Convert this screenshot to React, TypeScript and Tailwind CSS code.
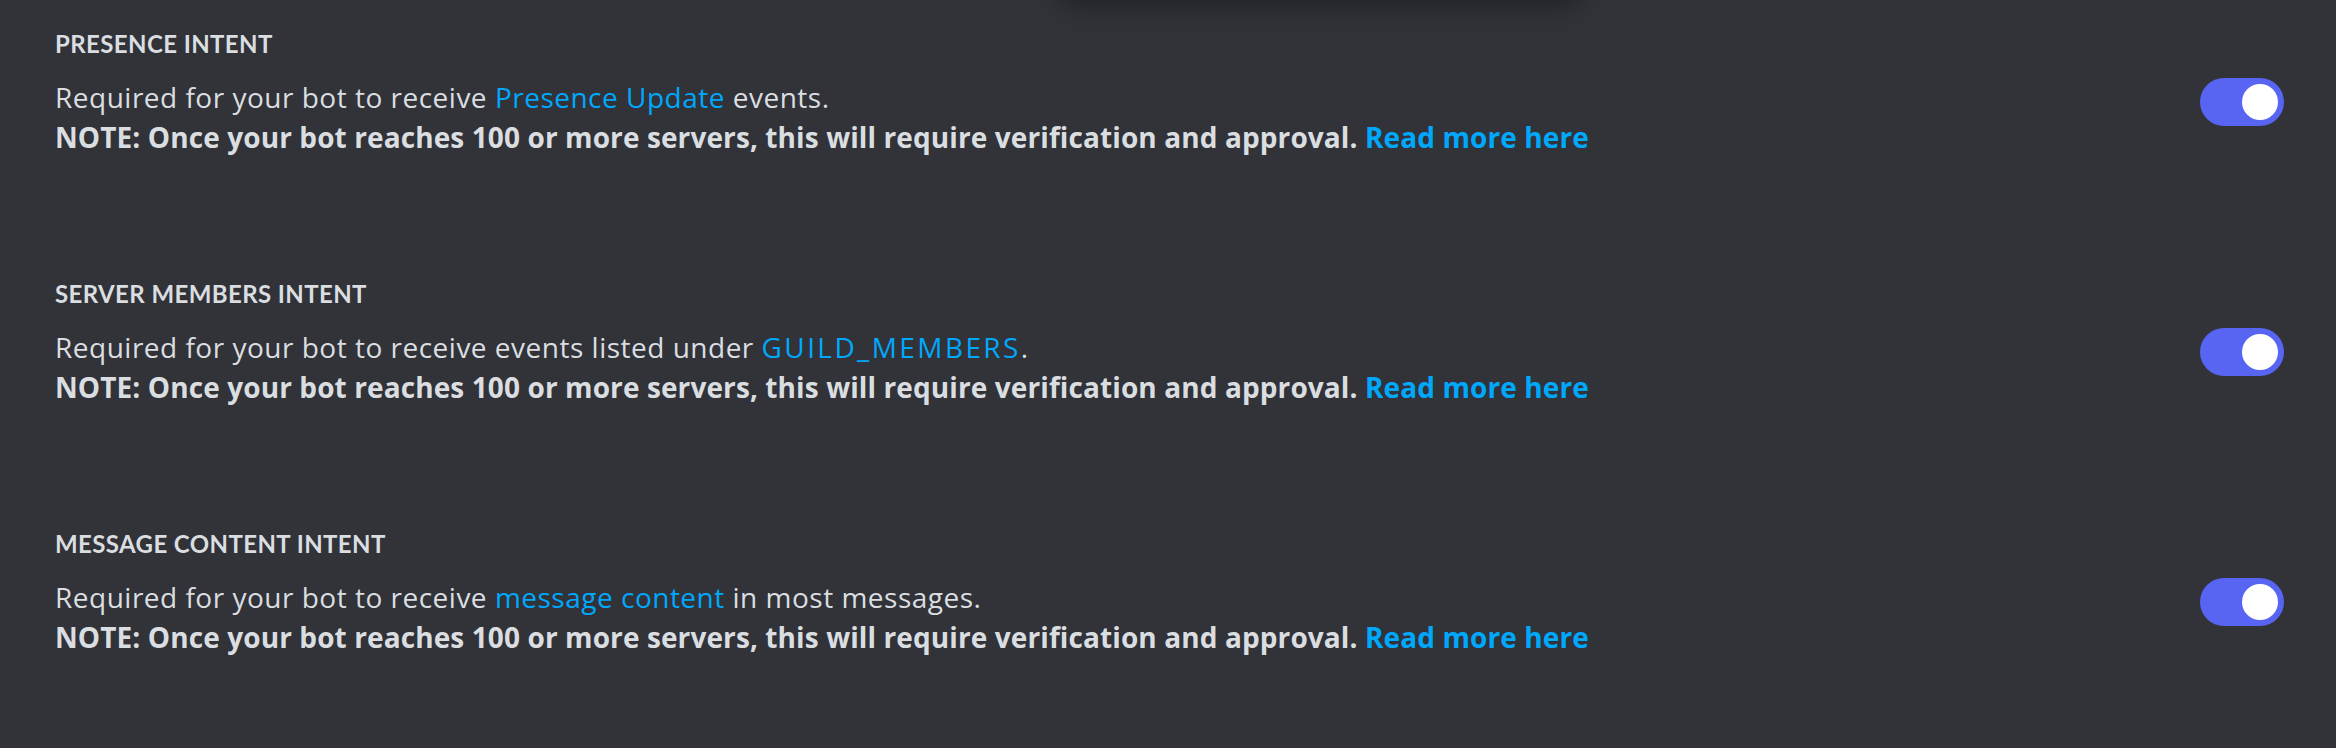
import React from 'react';

interface Intent {
  title: string;
  before: string;
  link: string;
  after: string;
  linkClass?: string;
}

const intents: Intent[] = [
  {
    title: 'Presence Intent',
    before: 'Required for your bot to receive ',
    link: 'Presence Update',
    after: ' events.',
  },
  {
    title: 'Server Members Intent',
    before: 'Required for your bot to receive events listed under ',
    link: 'GUILD_MEMBERS',
    after: '.',
    linkClass: 'tracking-[2.4px]',
  },
  {
    title: 'Message Content Intent',
    before: 'Required for your bot to receive ',
    link: 'message content',
    after: ' in most messages.',
  },
];

function Toggle() {
  return (
    <div className="flex h-[48px] w-[84px] shrink-0 items-center justify-end rounded-full bg-[#5865f2] pr-[6px]">
      <div className="h-[36px] w-[36px] rounded-full bg-white" />
    </div>
  );
}

export default function App() {
  return (
    <div className="relative h-[748px] w-full overflow-hidden bg-[#313338] font-['Lato','Liberation_Sans',sans-serif]">
      {/* shadow cast by the popup sitting above the viewport */}
      <div className="absolute -top-[60px] left-[1060px] h-[60px] w-[520px] rounded-lg shadow-[0_6px_28px_rgba(0,0,0,0.35)]" />

      <div className="flex flex-col gap-[121px] pl-[55px] pr-[52px] pt-[28px]">
        {intents.map((intent) => (
          <div key={intent.title} className="flex flex-col">
            <h3 className="text-[24px] font-bold uppercase leading-[32px] tracking-[0.4px] text-[#dbdee1]">
              {intent.title}
            </h3>
            <div className="mt-[17px] flex items-start justify-between">
              <div className="font-['Open_Sans','Liberation_Sans',sans-serif] text-[28px] leading-[40px] text-[#dbdee1]">
                <p className="tracking-[0.5px]">
                  {intent.before}
                  <span className={`cursor-pointer text-[#00a8fc] ${intent.linkClass ?? ''}`}>{intent.link}</span>
                  {intent.after}
                </p>
                <p className="font-bold tracking-[0.1px]">
                  NOTE: Once your bot reaches 100 or more servers, this will require verification and approval.{' '}
                  <span className="cursor-pointer text-[#00a8fc]">Read more here</span>
                </p>
              </div>
              <div className="mt-[1px]">
                <Toggle />
              </div>
            </div>
          </div>
        ))}
      </div>
    </div>
  );
}
